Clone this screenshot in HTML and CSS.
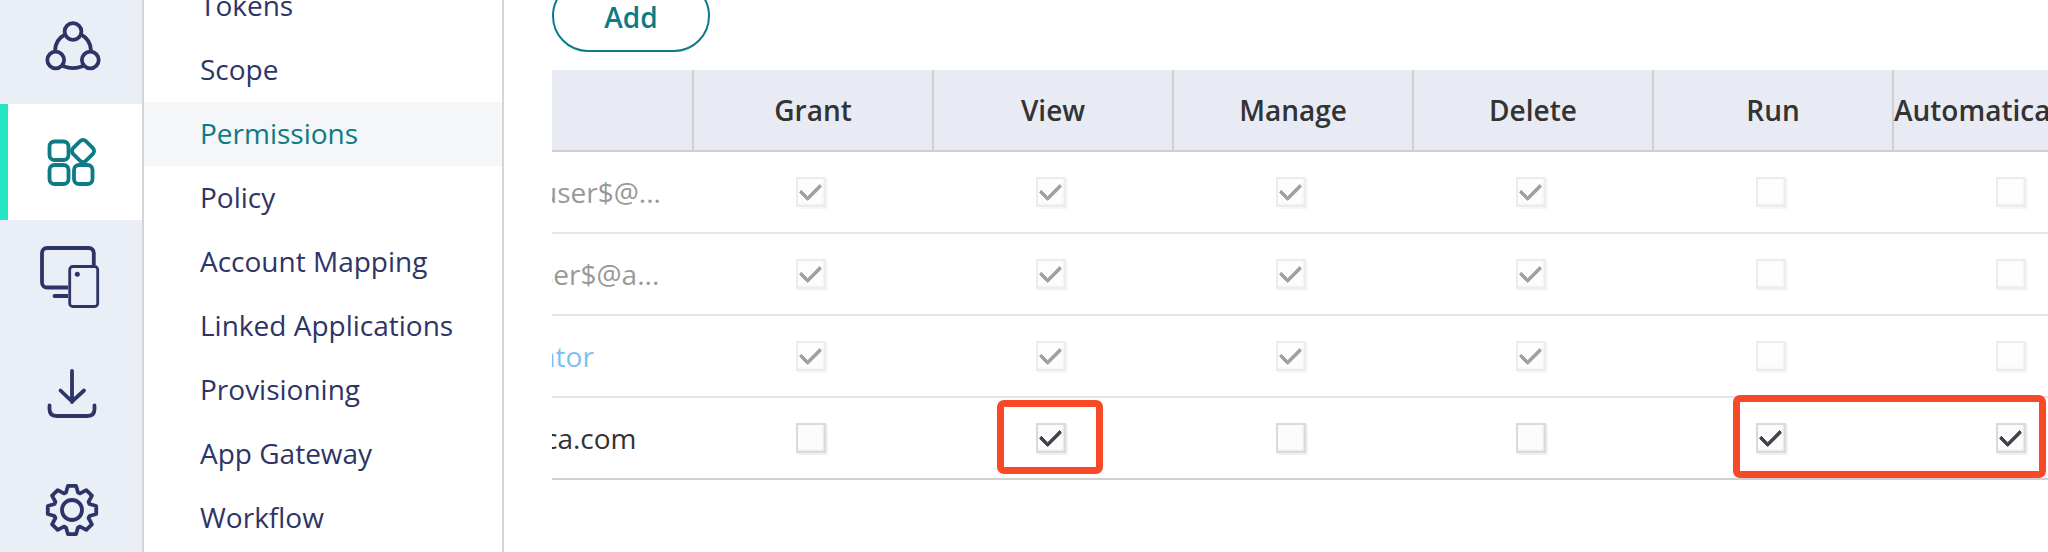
FILE: index.html
```html
<!DOCTYPE html>
<html lang="en">
<head>
    <meta charset="UTF-8">
    <meta name="viewport" content="width=device-width, initial-scale=1.0">
    <title>Permissions</title>
    <link rel="stylesheet" href="styles.css">
</head>
<body>
    <nav class="rail" aria-label="Main">
        <a class="rail-item" href="#" aria-label="Access">
            <svg class="icon" viewBox="0 0 64 64">
                <circle cx="34" cy="17.5" r="8.4"/>
                <circle cx="16.7" cy="46" r="8.4"/>
                <circle cx="51.3" cy="46" r="8.4"/>
                <path d="M26 20.5A19 19 0 0 0 16 37M42 20.5A19 19 0 0 1 52 37M24.5 52.2A26 26 0 0 0 43.5 52.2"/>
            </svg>
        </a>
        <a class="rail-item active" href="#" aria-label="Apps">
            <svg class="icon" viewBox="0 0 64 64">
                <rect x="10.5" y="11.5" width="19" height="18.5" rx="5"/>
                <rect x="10.5" y="35" width="19" height="19" rx="5"/>
                <rect x="35" y="35" width="18.5" height="19" rx="5"/>
                <rect x="35" y="12" width="18" height="18" rx="4" transform="rotate(45 44 21)"/>
            </svg>
        </a>
        <a class="rail-item" href="#" aria-label="Devices">
            <svg class="icon" viewBox="0 0 64 64">
                <path d="M54.8 19V7A5 5 0 0 0 49.8 2H8A5 5 0 0 0 3 7V36.5A5 5 0 0 0 8 41.5H29M15.5 50H29" stroke-linecap="butt"/>
                <path d="M15.5 50H27"/>
                <rect x="30.7" y="20.5" width="28" height="40" rx="3" stroke-width="2.8"/>
                <circle class="dot" cx="38.3" cy="28.3" r="2.5"/>
            </svg>
        </a>
        <a class="rail-item" href="#" aria-label="Downloads">
            <svg class="icon" viewBox="0 0 64 64">
                <path d="M33 9V40M21.5 28.5L33 39.5L45 28.5M10.5 43.5V47Q10.5 54 17.5 54H48.5Q55.5 54 55.5 47V43.5"/>
            </svg>
        </a>
        <a class="rail-item" href="#" aria-label="Settings">
            <svg class="icon" viewBox="0 0 64 64">
                <g transform="translate(33 32)">
                    <circle r="10"/>
                    <path d="M-6 -17.5L-4 -24.2H4L6 -17.5L8.1 -16.6L14.3 -19.9L19.9 -14.3L16.6 -8.1L17.5 -6L24.2 -4V4L17.5 6L16.6 8.1L19.9 14.3L14.3 19.9L8.1 16.6L6 17.5L4 24.2H-4L-6 17.5L-8.1 16.6L-14.3 19.9L-19.9 14.3L-16.6 8.1L-17.5 6L-24.2 4V-4L-17.5 -6L-16.6 -8.1L-19.9 -14.3L-14.3 -19.9L-8.1 -16.6Z"/>
                </g>
            </svg>
        </a>
    </nav>

    <nav class="submenu" aria-label="Settings sections">
        <a href="#">Tokens</a>
        <a href="#">Scope</a>
        <a class="active" href="#">Permissions</a>
        <a href="#">Policy</a>
        <a href="#">Account Mapping</a>
        <a href="#">Linked Applications</a>
        <a href="#">Provisioning</a>
        <a href="#">App Gateway</a>
        <a href="#">Workflow</a>
    </nav>

    <main class="content">
        <button class="add-button" type="button">Add</button>
        <div class="table-scroll">
            <table class="permissions">
                <colgroup>
                    <col class="name-col">
                    <col><col><col><col><col><col>
                </colgroup>
                <thead>
                    <tr>
                        <th></th>
                        <th>Grant</th>
                        <th>View</th>
                        <th>Manage</th>
                        <th>Delete</th>
                        <th>Run</th>
                        <th class="wide">Automatically</th>
                    </tr>
                </thead>
                <tbody>
                    <tr class="locked">
                        <td class="name">user$@...</td>
                        <td><input type="checkbox" aria-label="Grant" checked disabled></td>
                        <td><input type="checkbox" aria-label="View" checked disabled></td>
                        <td><input type="checkbox" aria-label="Manage" checked disabled></td>
                        <td><input type="checkbox" aria-label="Delete" checked disabled></td>
                        <td><input type="checkbox" aria-label="Run" disabled></td>
                        <td><input type="checkbox" aria-label="Automatically" disabled></td>
                    </tr>
                    <tr class="locked">
                        <td class="name">ser$@a...</td>
                        <td><input type="checkbox" aria-label="Grant" checked disabled></td>
                        <td><input type="checkbox" aria-label="View" checked disabled></td>
                        <td><input type="checkbox" aria-label="Manage" checked disabled></td>
                        <td><input type="checkbox" aria-label="Delete" checked disabled></td>
                        <td><input type="checkbox" aria-label="Run" disabled></td>
                        <td><input type="checkbox" aria-label="Automatically" disabled></td>
                    </tr>
                    <tr class="locked">
                        <td class="name"><a href="#">ator</a></td>
                        <td><input type="checkbox" aria-label="Grant" checked disabled></td>
                        <td><input type="checkbox" aria-label="View" checked disabled></td>
                        <td><input type="checkbox" aria-label="Manage" checked disabled></td>
                        <td><input type="checkbox" aria-label="Delete" checked disabled></td>
                        <td><input type="checkbox" aria-label="Run" disabled></td>
                        <td><input type="checkbox" aria-label="Automatically" disabled></td>
                    </tr>
                    <tr class="editable">
                        <td class="name">ca.com</td>
                        <td><input type="checkbox" aria-label="Grant"></td>
                        <td><input type="checkbox" aria-label="View" checked><span class="highlight highlight-view"></span></td>
                        <td><input type="checkbox" aria-label="Manage"></td>
                        <td><input type="checkbox" aria-label="Delete"></td>
                        <td><input type="checkbox" aria-label="Run" checked><span class="highlight highlight-run"></span></td>
                        <td><input type="checkbox" aria-label="Automatically" checked></td>
                    </tr>
                </tbody>
            </table>
        </div>
    </main>
</body>
</html>
```
FILE: styles.css
```css
* {
    box-sizing: border-box;
}
body {
    display: flex;
    height: 100vh;
    margin: 0;
    overflow: hidden;
    background-color: #ffffff;
    color: #333333;
    font-family: "Open Sans", sans-serif;
    font-size: 28px;
    line-height: 38px;
}
a {
    text-decoration: none;
}

/* Icon rail */
.rail {
    flex: none;
    width: 144px;
    background-color: #e9eef7;
    border-right: 2px solid #d5d5d5;
}
.rail-item {
    display: flex;
    justify-content: center;
    align-items: center;
    height: 116px;
    color: #2e3566;
}
.rail-item:first-child {
    margin-top: -12px;
}
.rail-item.active {
    background-color: #ffffff;
    color: #0c7b85;
    box-shadow: inset 8px 0 0 #25e6c3;
}
.icon {
    width: 64px;
    height: 64px;
    fill: none;
    stroke: currentColor;
    stroke-width: 3.8;
    stroke-linecap: round;
    stroke-linejoin: round;
}
.icon .dot {
    fill: currentColor;
    stroke: none;
}

/* Section menu */
.submenu {
    flex: none;
    width: 360px;
    border-right: 2px solid #d5d5d5;
}
.submenu a {
    display: block;
    height: 64px;
    padding: 12px 0 14px 56px;
    color: #2e3566;
}
.submenu a:first-child {
    margin-top: -26px;
}
.submenu a.active {
    background-color: #f4f6f8;
    color: #0c7b85;
}

.content {
    flex: 1;
    min-width: 0;
    padding-left: 48px;
}
.add-button {
    display: block;
    width: 158px;
    height: 72px;
    margin: -20px 0 18px;
    padding: 2px 0 0;
    background-color: #ffffff;
    border: 2px solid #0c7b85;
    border-radius: 36px;
    color: #0c7b85;
    font: inherit;
    font-weight: 600;
    cursor: pointer;
}

/* Permissions table */
.table-scroll {
    overflow: hidden;
}
.permissions {
    width: 1594px;
    margin-left: -12px;
    table-layout: fixed;
    border-collapse: separate;
    border-spacing: 0;
}
.name-col {
    width: 154px;
}
.permissions th {
    height: 82px;
    padding: 0;
    background-color: #e9ebf4;
    border-right: 2px solid #d0d0d0;
    border-bottom: 2px solid #d0d0d0;
    font-weight: 600;
}
.permissions th.wide {
    text-align: left;
}
.permissions td {
    position: relative;
    height: 82px;
    padding: 0 6px 0 0;
    border-bottom: 2px solid #e6e6e6;
    text-align: center;
}
.permissions tr:last-child td {
    border-bottom-color: #d0d0d0;
}
.permissions td.name {
    text-align: left;
    white-space: nowrap;
}
.permissions .editable .name {
    padding-left: 4px;
}
.locked .name {
    color: #999999;
}
.locked .name a {
    color: #7fbef0;
}

input[type="checkbox"] {
    appearance: none;
    display: grid;
    place-content: center;
    width: 30px;
    height: 30px;
    margin: 0 auto;
    background-color: #fcfcfc;
    border: 2px solid #dadada;
    box-shadow: 2px 2px 0 #f1f1f1, inset -1px -1px 2px #e6e6e6;
}
input[type="checkbox"]:checked::before {
    content: "";
    width: 17px;
    height: 9px;
    margin: 0 1px 6px 0;
    border-left: 4px solid #42454c;
    border-bottom: 4px solid #42454c;
    border-radius: 2px;
    transform: rotate(-45deg);
}
input[type="checkbox"]:disabled {
    opacity: 0.5;
}

.highlight {
    position: absolute;
    z-index: 1;
    border: 7px solid #f54a25;
    border-radius: 7px;
    pointer-events: none;
}
.highlight-view {
    top: 2px;
    left: 63px;
    width: 106px;
    height: 74px;
}
.highlight-run {
    top: -3px;
    left: 79px;
    width: 313px;
    height: 83px;
}
```
